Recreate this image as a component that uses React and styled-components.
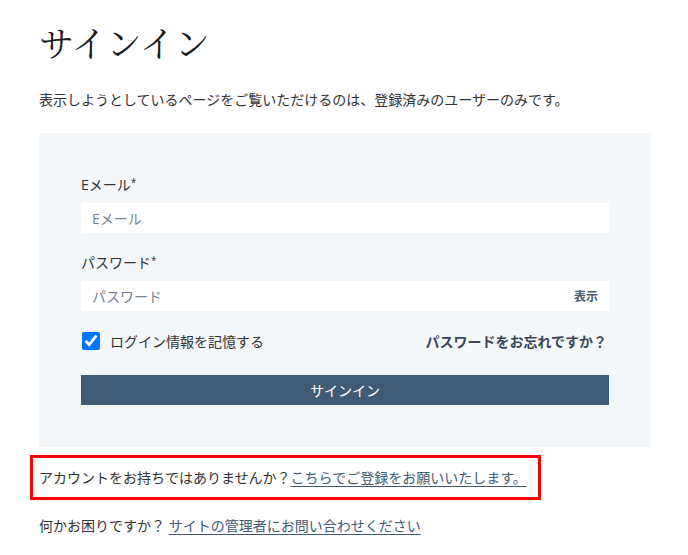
import React from "react";
import styled, { createGlobalStyle } from "styled-components";

const Global = createGlobalStyle`
  html, body { margin: 0; padding: 0; background: #ffffff; }
  body { font-family: "Open Sans", "Noto Sans CJK JP", sans-serif; color: #333333; }
  * { box-sizing: border-box; }
`;

const Page = styled.div`
  width: 688px;
  padding: 0 37px 0 39px;
`;

const Title = styled.h1`
  margin: 0;
  padding-top: 20px;
  font-family: "Noto Serif CJK JP", "Liberation Serif", serif;
  font-weight: 400;
  font-size: 35px;
  line-height: 44px;
  color: #1a1a1a;
`;

const Lead = styled.p`
  margin: 25px 0 0;
  font-size: 14px;
  line-height: 22px;
  color: #333;
`;

const Panel = styled.div`
  margin-top: 22px;
  width: 612px;
  background: #f4f7fa;
  padding: 42px 42px 42px;
  display: flex;
  flex-direction: column;
`;

const Label = styled.label`
  font-size: 14px;
  line-height: 20px;
  color: #333;
  margin-top: ${(p) => (p.$first ? "0" : "20px")};
`;

const Star = styled.sup`
  font-size: 10px;
  line-height: 0;
  vertical-align: 4px;
`;

const InputWrap = styled.div`
  margin-top: 8px;
  height: 30px;
  background: #ffffff;
  display: flex;
  align-items: center;
  padding: 0 11px;
`;

const Input = styled.input`
  flex: 1;
  border: none;
  outline: none;
  background: transparent;
  font-family: "Open Sans", "Noto Sans CJK JP", sans-serif;
  font-size: 14px;
  color: #333;
  padding: 0;
  &::placeholder { color: #75818d; }
`;

const Show = styled.span`
  font-size: 12px;
  font-weight: 700;
  color: #4a5a6b;
`;

const Row = styled.div`
  margin-top: 20px;
  height: 20px;
  display: flex;
  align-items: center;
  justify-content: space-between;
`;

const Remember = styled.label`
  display: flex;
  align-items: center;
  gap: 10px;
  font-size: 14px;
  color: #333;
`;

const Check = styled.input`
  width: 18px;
  height: 18px;
  margin: 0 0 0 1px;
  accent-color: #0075ff;
`;

const Forgot = styled.a`
  font-size: 14px;
  font-weight: 700;
  color: #3a4757;
  text-decoration: none;
  margin-right: 2px;
`;

const Button = styled.button`
  margin-top: 24px;
  height: 30px;
  border: none;
  background: #415b77;
  color: #ffffff;
  font-family: "Open Sans", "Noto Sans CJK JP", sans-serif;
  font-size: 14px;
  cursor: pointer;
`;

const Highlight = styled.p`
  margin: 8px 0 0 -9px;
  display: inline-block;
  border: 3px solid #ff0000;
  padding: 9px 11px 8px 6px;
  font-size: 14px;
  line-height: 22px;
  color: #333;
`;

const Help = styled.p`
  margin: 15px 0 0;
  font-size: 14px;
  line-height: 22px;
  color: #333;
`;

const Link = styled.a`
  color: #415b77;
  text-decoration: underline;
  text-underline-offset: 3px;
`;

export default function App() {
  return (
    <>
      <Global />
      <Page>
        <Title>サインイン</Title>
        <Lead>表示しようとしているページをご覧いただけるのは、登録済みのユーザーのみです。</Lead>
        <Panel>
          <Label $first>Eメール<Star>*</Star></Label>
          <InputWrap>
            <Input placeholder="Eメール" />
          </InputWrap>
          <Label>パスワード<Star>*</Star></Label>
          <InputWrap>
            <Input type="password" placeholder="パスワード" />
            <Show>表示</Show>
          </InputWrap>
          <Row>
            <Remember>
              <Check type="checkbox" defaultChecked />
              ログイン情報を記憶する
            </Remember>
            <Forgot href="#">パスワードをお忘れですか？</Forgot>
          </Row>
          <Button>サインイン</Button>
        </Panel>
        <div>
          <Highlight>
            アカウントをお持ちではありませんか？<Link href="#">こちらでご登録をお願いいたします。</Link>
          </Highlight>
        </div>
        <Help>
          何かお困りですか？ <Link href="#">サイトの管理者にお問い合わせください</Link>
        </Help>
      </Page>
    </>
  );
}
